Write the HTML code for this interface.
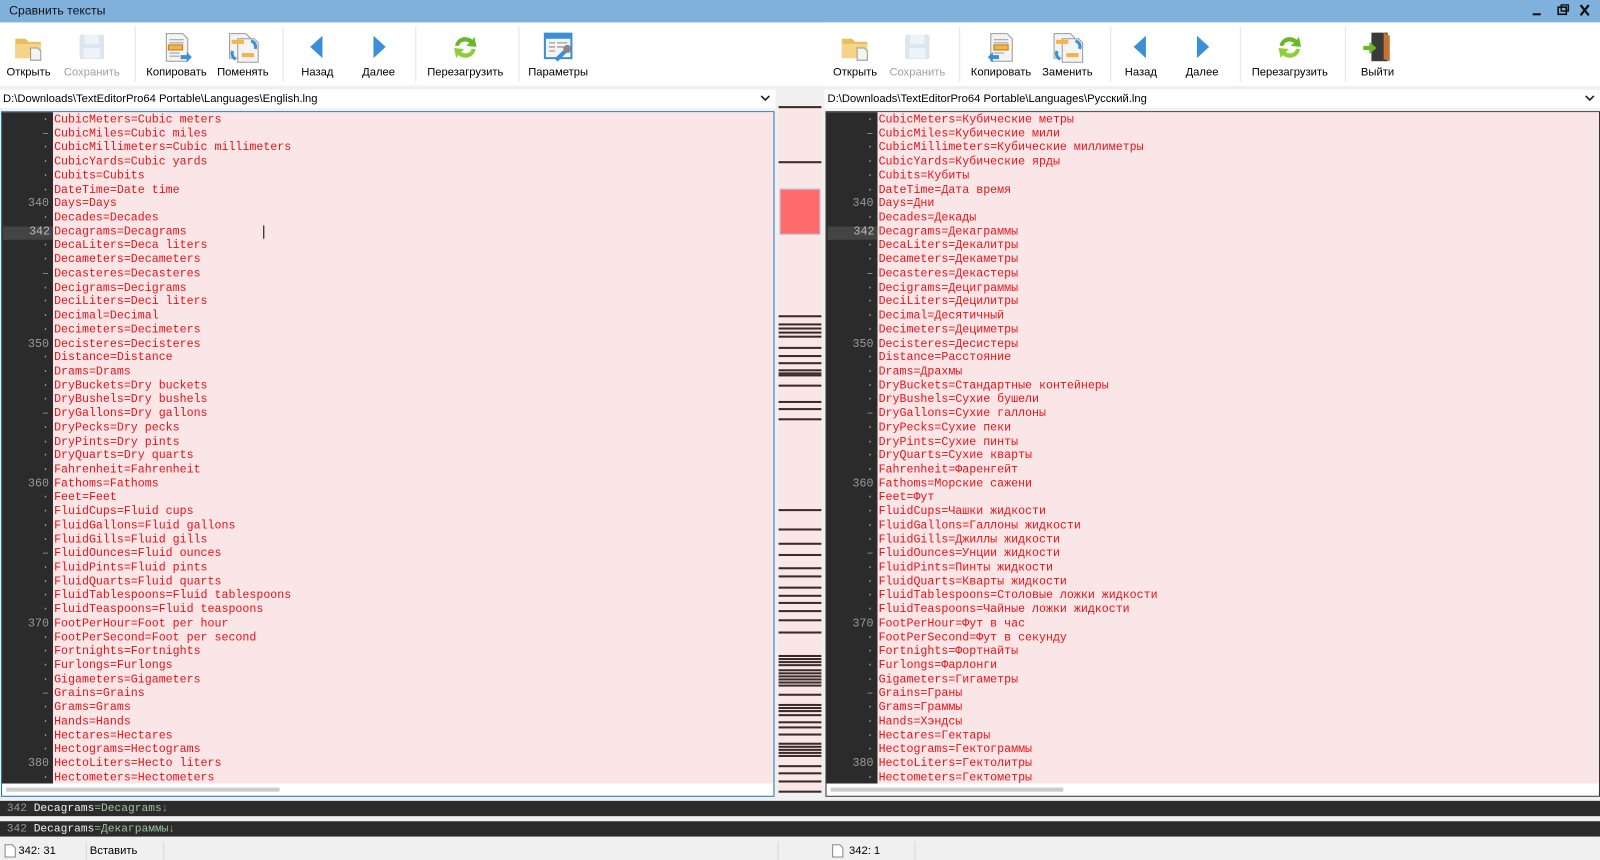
<!DOCTYPE html>
<html><head><meta charset="utf-8"><style>
*{margin:0;padding:0;box-sizing:border-box}
html,body{width:1600px;height:860px;overflow:hidden;background:#f0f0f0}
#w{position:absolute;left:0;top:0;width:1568px;height:843px;transform:scale(1.0204,1.0202);transform-origin:0 0;font-family:"Liberation Sans","DejaVu Sans",sans-serif;font-size:11px;color:#000}
.abs{position:absolute}
.title{left:0;top:0;width:1568px;height:22px;background:#80b0dc;}
.title span{position:absolute;left:9px;top:3px;font-size:12px;color:#111}
.tb{top:22px;height:62px;background:#fff}
.btn{position:absolute;top:0;width:60px;height:62px;text-align:center}
.btn .lab{position:absolute;left:-10px;right:-10px;top:43px;font-size:11px;white-space:nowrap}
.btn svg{position:absolute;left:14px;top:8px}
.sep{position:absolute;top:4px;width:1px;height:54px;background:#e3e3e3}
.path{top:88px;height:18px;background:#fff;font-size:11px;padding:3px 3px;white-space:nowrap}
.chev{position:absolute;right:4px;top:2px}
.ed{top:109px;height:672px;background:#fff;border:1px solid #333}
.edl{border-color:#1e6fb0}
.gut{position:absolute;left:0;top:0;width:50px;height:658px;background:#2b2b2b}
.pink{position:absolute;left:50px;right:0;top:0;height:658px;background:#fae6e6}
.lines{position:absolute;left:0;top:2px;font-family:"Liberation Mono","DejaVu Sans Mono",monospace;font-size:11.4px;line-height:13.72px;white-space:pre}
.ln{display:block;height:13.72px;position:relative}
.ln .n{position:absolute;left:0;width:46px;text-align:right;color:#999}
.ln .t{position:absolute;left:51px;color:#e8121a}
.ln.cur .n{background:#444;left:1px;width:49px;padding-right:3px;color:#bbb}
.hs{position:absolute;left:4px;top:662px;height:4px;background:#ccc}
.map{left:763px;top:104px;width:42px;height:672px;background:#fae6e6}
.map i{position:absolute;left:0;width:42px;height:2px;background:#3a2a2a}
.dark{left:0;width:1568px;height:15px;background:#2b2b2b;font-family:"Liberation Mono",monospace;font-size:11px;line-height:16px;white-space:pre;color:#eee}
.dark .g{color:#999}.dark .v{color:#9ec59e}
.status{left:0;top:824px;width:1568px;height:19px;background:#f0f0f0;font-size:11px}
.status span{position:absolute;top:4px}
.vs{position:absolute;top:1px;width:1px;height:18px;background:#d8d8d8}
</style></head><body><div id="w">
<div class="abs title"><span>Сравнить тексты</span>
<svg class="abs" style="left:1500px;top:4px" width="60" height="14"><rect x="2" y="9" width="8" height="2" fill="#111"/><rect x="27" y="3" width="8" height="7" fill="none" stroke="#111" stroke-width="1.6"/><rect x="30" y="0.8" width="7" height="6" fill="none" stroke="#111" stroke-width="1.4"/><path d="M49 1l8 10M57 1l-8 10" stroke="#111" stroke-width="2.2"/></svg></div>

<div class="abs tb" style="left:0;width:784px">
<div class="btn" style="left:-2px"><svg width="32" height="32"><path d="M3 8h10l3 3h12v16H3z" fill="#e8bd5e"/><path d="M3 13h25v14H3z" fill="#f5d489"/><path d="M18 17h7l3 3v9H18z" fill="#f4f4f4" stroke="#999"/></svg><div class="lab">Открыть</div></div>
<div class="btn" style="left:60px"><svg width="32" height="32"><rect x="4" y="4" width="24" height="24" rx="2" fill="#dbe6ee"/><rect x="9" y="4" width="14" height="9" fill="#eef3f7"/><rect x="8" y="17" width="16" height="10" fill="#eef3f7"/></svg><div class="lab" style="color:#a0a0a0">Сохранить</div></div>
<div class="sep" style="left:132px"></div>
<div class="btn" style="left:143px"><svg width="32" height="32"><path d="M6 3h16l5 5v22H6z" fill="#f4f4f4" stroke="#999"/><path d="M9 9h14M9 12h14M9 22h10M9 25h10" stroke="#999"/><rect x="8" y="14" width="14" height="5" fill="#f5b34a" stroke="#c07a10"/><path d="M20 24h6v-3l5 5-5 5v-3h-6z" fill="#3a8fd8"/></svg><div class="lab">Копировать</div></div>
<div class="btn" style="left:208px"><svg width="32" height="32"><path d="M3 3h16l4 4v20H3z" fill="#f4f4f4" stroke="#999"/><path d="M11 8h16l4 4v19H11z" fill="#f4f4f4" stroke="#999"/><rect x="5" y="9" width="12" height="4" fill="#f5b34a"/><rect x="15" y="22" width="12" height="4" fill="#f5b34a"/><path d="M24 10a6 6 0 0 1 4 8M9 28a6 6 0 0 1-3-8" stroke="#3a8fd8" stroke-width="3" fill="none"/></svg><div class="lab">Поменять</div></div>
<div class="sep" style="left:277px"></div>
<div class="btn" style="left:281px"><svg width="32" height="32"><path d="M21 5v22L9 16z" fill="#3a8fd8"/></svg><div class="lab">Назад</div></div>
<div class="btn" style="left:341px"><svg width="32" height="32"><path d="M11 5v22l12-11z" fill="#3a8fd8"/></svg><div class="lab">Далее</div></div>
<div class="sep" style="left:407px"></div>
<div class="btn" style="left:426px"><svg width="32" height="32"><path d="M6 15a10 9 0 0 1 17-6l2-3 2 10-10-1 3-3a6 5 0 0 0-10 3z" fill="#6ab82a"/><path d="M26 18a10 9 0 0 1-17 6l-2 3-2-10 10 1-3 3a6 5 0 0 0 10-3z" fill="#8ccf3a"/></svg><div class="lab">Перезагрузить</div></div>
<div class="sep" style="left:508px"></div>
<div class="btn" style="left:517px"><svg width="32" height="32"><rect x="3" y="3" width="26" height="24" fill="#f4f4f4" stroke="#3a8fd8" stroke-width="2"/><rect x="3" y="3" width="26" height="5" fill="#3a8fd8"/><path d="M7 12h6M7 16h6M7 20h6M15 12h10M15 16h10" stroke="#888"/><path d="M14 29l9-9" stroke="#3a8fd8" stroke-width="4"/><circle cx="25" cy="18" r="4" fill="#888"/></svg><div class="lab">Параметры</div></div>
</div>

<div class="abs tb" style="left:784px;width:784px"></div>
<div class="abs tb" style="left:808px;width:760px">
<div class="btn" style="left:0px"><svg width="32" height="32"><path d="M3 8h10l3 3h12v16H3z" fill="#e8bd5e"/><path d="M3 13h25v14H3z" fill="#f5d489"/><path d="M18 17h7l3 3v9H18z" fill="#f4f4f4" stroke="#999"/></svg><div class="lab">Открыть</div></div>
<div class="btn" style="left:61px"><svg width="32" height="32"><rect x="4" y="4" width="24" height="24" rx="2" fill="#dbe6ee"/><rect x="9" y="4" width="14" height="9" fill="#eef3f7"/><rect x="8" y="17" width="16" height="10" fill="#eef3f7"/></svg><div class="lab" style="color:#a0a0a0">Сохранить</div></div>
<div class="sep" style="left:132px"></div>
<div class="btn" style="left:143px"><svg width="32" height="32"><path d="M6 3h16l5 5v22H6z" fill="#f4f4f4" stroke="#999"/><path d="M9 9h14M9 12h14M9 22h10" stroke="#999"/><rect x="9" y="14" width="14" height="5" fill="#f5b34a" stroke="#c07a10"/><path d="M14 24H8v-3l-5 5 5 5v-3h6z" fill="#3a8fd8"/></svg><div class="lab">Копировать</div></div>
<div class="btn" style="left:208px"><svg width="32" height="32"><path d="M3 3h16l4 4v20H3z" fill="#f4f4f4" stroke="#999"/><path d="M11 8h16l4 4v19H11z" fill="#f4f4f4" stroke="#999"/><rect x="5" y="9" width="12" height="4" fill="#f5b34a"/><rect x="15" y="22" width="12" height="4" fill="#f5b34a"/><path d="M24 10a6 6 0 0 1 4 8M9 28a6 6 0 0 1-3-8" stroke="#3a8fd8" stroke-width="3" fill="none"/></svg><div class="lab">Заменить</div></div>
<div class="sep" style="left:280px"></div>
<div class="btn" style="left:280px"><svg width="32" height="32"><path d="M21 5v22L9 16z" fill="#3a8fd8"/></svg><div class="lab">Назад</div></div>
<div class="btn" style="left:340px"><svg width="32" height="32"><path d="M11 5v22l12-11z" fill="#3a8fd8"/></svg><div class="lab">Далее</div></div>
<div class="sep" style="left:407px"></div>
<div class="btn" style="left:426px"><svg width="32" height="32"><path d="M6 15a10 9 0 0 1 17-6l2-3 2 10-10-1 3-3a6 5 0 0 0-10 3z" fill="#6ab82a"/><path d="M26 18a10 9 0 0 1-17 6l-2 3-2-10 10 1-3 3a6 5 0 0 0 10-3z" fill="#8ccf3a"/></svg><div class="lab">Перезагрузить</div></div>
<div class="sep" style="left:510px"></div>
<div class="btn" style="left:512px"><svg width="32" height="32"><rect x="10" y="2" width="16" height="28" fill="#3a3a3a"/><path d="M22 2l6 3v25l-6-2z" fill="#c8742e"/><path d="M2 15h6v-4l7 6-7 6v-4H2z" fill="#6ab82a"/></svg><div class="lab">Выйти</div></div>
</div>

<div class="abs path" style="left:0;width:760px">D:\Downloads\TextEditorPro64 Portable\Languages\English.lng<svg class="chev" width="12" height="12"><path d="M2 4l4 4 4-4" stroke="#222" stroke-width="1.6" fill="none"/></svg></div>
<div class="abs path" style="left:808px;width:760px">D:\Downloads\TextEditorPro64 Portable\Languages\Русский.lng<svg class="chev" width="12" height="12"><path d="M2 4l4 4 4-4" stroke="#222" stroke-width="1.6" fill="none"/></svg></div>

<div class="abs ed edl" style="left:1px;width:758px"><div class="gut"></div><div class="pink"></div>
<div class="lines" id="L"></div><div class="hs" style="width:268px"></div>
<div class="abs" style="left:256px;top:111px;width:1px;height:13px;background:#000"></div></div>
<div class="abs ed" style="left:809px;width:759px"><div class="gut"></div><div class="pink"></div>
<div class="lines" id="R"></div><div class="hs" style="width:228px"></div></div>

<div class="abs map" id="M"><div class="abs" style="left:1px;top:81px;width:40px;height:45px;background:#ff6b6b;border:1px solid #b8c4e8"></div></div>

<div class="abs dark" style="top:785px"><span class="g"> 342 </span>Decagrams<span class="v">=Decagrams</span><span class="g">↓</span></div>
<div class="abs dark" style="top:805px"><span class="g"> 342 </span>Decagrams<span class="v">=Декаграммы</span><span class="g">↓</span></div>

<div class="abs status">
<svg class="abs" style="left:4px;top:3px" width="12" height="14"><path d="M1 1h7l3 3v9H1z" fill="#fff" stroke="#888"/></svg>
<span style="left:18px">342: 31</span><div class="vs" style="left:84px"></div><span style="left:88px">Вставить</span><div class="vs" style="left:160px"></div>
<div class="vs" style="left:762px"></div>
<svg class="abs" style="left:815px;top:3px" width="12" height="14"><path d="M1 1h7l3 3v9H1z" fill="#fff" stroke="#888"/></svg>
<span style="left:832px">342: 1</span><div class="vs" style="left:896px"></div>
</div>
</div>
<script>
var en=[["CubicMeters","Cubic meters"],["CubicMiles","Cubic miles"],["CubicMillimeters","Cubic millimeters"],["CubicYards","Cubic yards"],["Cubits","Cubits"],["DateTime","Date time"],["Days","Days"],["Decades","Decades"],["Decagrams","Decagrams"],["DecaLiters","Deca liters"],["Decameters","Decameters"],["Decasteres","Decasteres"],["Decigrams","Decigrams"],["DeciLiters","Deci liters"],["Decimal","Decimal"],["Decimeters","Decimeters"],["Decisteres","Decisteres"],["Distance","Distance"],["Drams","Drams"],["DryBuckets","Dry buckets"],["DryBushels","Dry bushels"],["DryGallons","Dry gallons"],["DryPecks","Dry pecks"],["DryPints","Dry pints"],["DryQuarts","Dry quarts"],["Fahrenheit","Fahrenheit"],["Fathoms","Fathoms"],["Feet","Feet"],["FluidCups","Fluid cups"],["FluidGallons","Fluid gallons"],["FluidGills","Fluid gills"],["FluidOunces","Fluid ounces"],["FluidPints","Fluid pints"],["FluidQuarts","Fluid quarts"],["FluidTablespoons","Fluid tablespoons"],["FluidTeaspoons","Fluid teaspoons"],["FootPerHour","Foot per hour"],["FootPerSecond","Foot per second"],["Fortnights","Fortnights"],["Furlongs","Furlongs"],["Gigameters","Gigameters"],["Grains","Grains"],["Grams","Grams"],["Hands","Hands"],["Hectares","Hectares"],["Hectograms","Hectograms"],["HectoLiters","Hecto liters"],["Hectometers","Hectometers"]];
var ru=["Кубические метры","Кубические мили","Кубические миллиметры","Кубические ярды","Кубиты","Дата время","Дни","Декады","Декаграммы","Декалитры","Декаметры","Декастеры","Дециграммы","Децилитры","Десятичный","Дециметры","Десистеры","Расстояние","Драхмы","Стандартные контейнеры","Сухие бушели","Сухие галлоны","Сухие пеки","Сухие пинты","Сухие кварты","Фаренгейт","Морские сажени","Фут","Чашки жидкости","Галлоны жидкости","Джиллы жидкости","Унции жидкости","Пинты жидкости","Кварты жидкости","Столовые ложки жидкости","Чайные ложки жидкости","Фут в час","Фут в секунду","Фортнайты","Фарлонги","Гигаметры","Граны","Граммы","Хэндсы","Гектары","Гектограммы","Гектолитры","Гектометры"];
function esc(s){return s.replace(/&/g,"&amp;").replace(/</g,"&lt;")}
function build(id,vals){var h="";for(var i=0;i<48;i++){var n=334+i;var g=n%10==0?String(n):(n%5==0?"–":"·");if(n==342)g="342";h+='<span class="ln'+(n==342?' cur':'')+'"><span class="n">'+g+'</span><span class="t">'+esc(en[i][0]+"="+vals[i])+'</span></span>';}document.getElementById(id).innerHTML=h;}
build("L",en.map(function(x){return x[1]}));build("R",ru);
var ys=[0,54,205,213,217,221,225,236,244,251,258,261,263,273,289,296,306,395,414,428,439,452,460,471,479,486,494,503,515,538,541,544,547,552,555,558,561,564,567,576,586,589,592,596,603,608,615,624,627,630,633,636,646,653,661,671];
var m=document.getElementById("M");ys.forEach(function(y){var e=document.createElement("i");e.style.top=y+"px";m.appendChild(e)});
</script>
</body></html>
